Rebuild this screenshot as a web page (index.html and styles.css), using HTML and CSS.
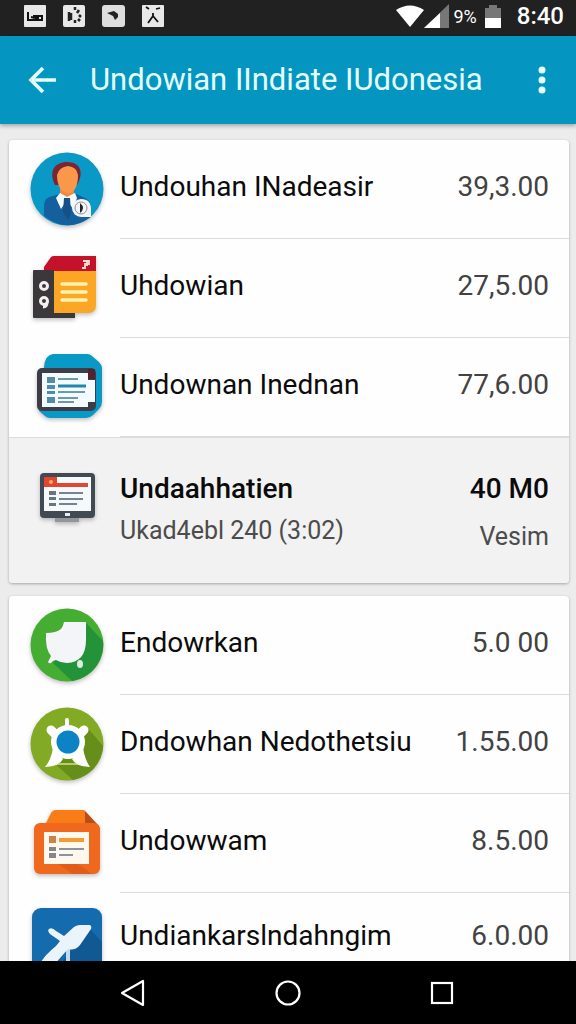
FILE: index.html
```html
<!DOCTYPE html>
<html lang="id">
<head>
    <meta charset="utf-8">
    <meta name="viewport" content="width=device-width, initial-scale=1">
    <title>Undowian IIndiate IUdonesia</title>
    <link rel="stylesheet" href="styles.css">
</head>
<body>
    <div class="status-bar">
        <div class="status-icons">
            <svg width="22" height="22" viewBox="0 0 22 22"><rect width="22" height="22" rx="1" fill="#e8e8e8"/><path d="M4 7v9M4 15h14M7 12l4 1M9 11h3v3M14 16v-5h4v5" fill="none" stroke="#111" stroke-width="2"/></svg>
            <svg width="22" height="22" viewBox="0 0 22 22"><rect width="22" height="22" rx="2" fill="#e8e8e8"/><path d="M6 7v9M8 8v7M12 2v3M16 5l-2 3M16 10l2 2M12 15v3M15 14l2 2" fill="none" stroke="#222" stroke-width="2.5"/></svg>
            <svg width="23" height="22" viewBox="0 0 23 22"><rect width="23" height="22" rx="3" fill="#dedede"/><path d="M5 8l7-2 4 3v3l-3 3-2-4z" fill="#222"/></svg>
            <svg width="22" height="22" viewBox="0 0 22 22"><rect width="22" height="22" rx="1" fill="#e8e8e8"/><path d="M4 2l3 2M14 4l4-1M6 18l5-7V8M11 11l5 6" fill="none" stroke="#111" stroke-width="1.8"/></svg>
        </div>
        <div class="status-info">
            <svg width="28" height="22" viewBox="0 0 28 22"><path d="M0 5Q14-4 28 5L14 22z" fill="#fff"/></svg>
            <svg width="25" height="24" viewBox="0 0 25 24"><path d="M0 24L25 0v24z" fill="#777"/><path d="M0 24L16 9v15z" fill="#fff"/></svg>
            <span class="percent">9%</span>
            <svg width="16" height="23" viewBox="0 0 16 23"><path d="M0 3h4V0h8v3h4v20H0z" fill="#777"/><path d="M0 13h16v10H0z" fill="#fff"/></svg>
            <span class="clock">8:40</span>
        </div>
    </div>

    <header class="app-bar">
        <button class="icon-button" aria-label="Kembali">
            <svg width="28" height="28" viewBox="0 0 28 28"><path d="M28 14H3M15 2L3 14l12 12" fill="none" stroke="#e4ffff" stroke-width="3.6"/></svg>
        </button>
        <h1>Undowian IIndiate IUdonesia</h1>
        <button class="icon-button" aria-label="Menu">
            <svg width="8" height="28" viewBox="0 0 8 28"><g fill="#e4ffff"><circle cx="4" cy="4" r="3.5"/><circle cx="4" cy="14" r="3.5"/><circle cx="4" cy="24" r="3.5"/></g></svg>
        </button>
    </header>

    <main class="content">
        <ul class="card">
            <li class="row">
                <svg class="row-icon" viewBox="0 0 76 76">
                    <circle cx="38" cy="38" r="36.5" fill="#0a98c6"/>
                    <path d="M15 65V55q0-9 9-10l10-3h11l11 5q6 3 6 10v9Q38 83 15 65z" fill="#145f9d"/>
                    <path d="M31 34h14v13l-7 5-7-5z" fill="#ef8a45"/>
                    <path d="M31 42l7 4 8-4 2 5-4 11-4-6h-4l-4 6-5-11z" fill="#f5fbff"/>
                    <path d="M35 47h6l1 15-3 7-5-8z" fill="#174f86"/>
                    <path d="M26 34c-7-14 0-23 12-23 14 0 17 11 10 23z" fill="#7c2434"/>
                    <path d="M28 24q2-8 11-9 9 1 10 9c0 10-3 18-10 18-7 0-11-8-11-18z" fill="#fa9749"/>
                    <path d="M52 48c7 0 10 4 10 10v8H52a9 9 0 010-18z" fill="#f2f5f8"/>
                    <circle cx="52" cy="57" r="6" fill="none" stroke="#8f9499"/><path d="M51 52q6 5 0 10z" fill="#222"/>
                </svg>
                <div class="row-body"><span class="title">Undouhan INadeasir</span><span class="value">39,3.00</span></div>
            </li>
            <li class="row">
                <svg class="row-icon" viewBox="0 0 76 76">
                    <path d="M15 24V17l7-10q1-1 3-1h42v18z" fill="#c5122c"/>
                    <path d="M5 20h20v42h21v6H5q-1 0-1-1V21q0-1 1-1z" fill="#3b383b"/>
                    <path d="M25 21h42v34q0 8-8 8H25z" fill="#fba624"/>
                    <path d="M33 34h24M33 42h24M33 50h24" fill="none" stroke="#fff3ae" stroke-width="3.5" stroke-linecap="round"/>
                    <path d="M54 11h6v3h-4v4h-3M58 10v6" fill="none" stroke="#ffdcd2" stroke-width="1.8"/>
                    <g fill="none" stroke="#f4eeee" stroke-width="3"><circle cx="15" cy="36" r="3.5"/><circle cx="15" cy="51" r="3.5"/><path d="M18 52q0 5-4 5"/></g>
                </svg>
                <div class="row-body"><span class="title">Uhdowian</span><span class="value">27,5.00</span></div>
            </li>
            <li class="row">
                <svg class="row-icon" viewBox="0 0 76 76">
                    <path d="M15 18q1-12 9-13h34q3 0 5 2l7 6q3 3 3 6v34q0 4-3 7l-6 6q-3 3-7 3H21q-3 0-5-2l-6-5z" fill="#0899c7"/>
                    <rect x="8" y="19" width="59" height="43" rx="5" fill="#3d3d49"/>
                    <path d="M13 24h46v7h7v22h-7v5H13z" fill="#f4fbff"/>
                    <path d="M59 20h7v10h-7z" fill="#53222e"/>
                    <path d="M18 28h8v6h-8zM18 36h8v4h-8zM18 42h8v3h-8zM18 48h8v6h-8z" fill="#518bad"/>
                    <path d="M29 30h20M29 43h27M29 49h20M29 53h16" stroke="#6c9aac" stroke-width="2"/>
                    <path d="M29 37h28" stroke="#2386ad" stroke-width="3"/>
                </svg>
                <div class="row-body"><span class="title">Undownan Inednan</span><span class="value">77,6.00</span></div>
            </li>
            <li class="row row-detail">
                <svg class="row-icon" viewBox="0 0 76 76">
                    <path d="M26 58h24v5H26z" fill="#91969a"/>
                    <rect x="11" y="14" width="55" height="45" rx="4" fill="#414a52"/>
                    <path d="M15 18h47v34H15z" fill="#f5f9fb"/>
                    <path d="M15 18h13v6h31v4H15z" fill="#e3462f"/><circle cx="22" cy="23" r="2" fill="#ffaf6f"/>
                    <path d="M20 32h7v4h-7zM20 38h7v3h-7zM20 44h7v3h-7z" fill="#68747e"/>
                    <path d="M30 34h24M30 40h24M30 45h18" stroke="#75838e" stroke-width="2"/>
                    <path d="M36 54h5v3h-5z" fill="#e7eef0"/>
                </svg>
                <div class="row-body">
                    <div class="lines"><span class="title">Undaahhatien</span><span class="subtitle">Ukad4ebl 240 (3:02)</span></div>
                    <div class="lines lines-end"><span class="title">40 M0</span><span class="subtitle">Vesim</span></div>
                </div>
            </li>
        </ul>

        <ul class="card">
            <li class="row">
                <svg class="row-icon" viewBox="0 0 76 76">
                    <circle cx="38" cy="38" r="36.5" fill="#45ad31"/>
                    <path d="M57 16l17 18A37 37 0 0143 74L24 56z" fill="#239239"/>
                    <path d="M17 26q10 0 15-4 2-2 3-7h22v18q0 22-19 23-6 0-11-3-3 0-5 3-2 1-3-1l3-6q-6-7-5-23z" fill="#f3f5f8"/>
                    <ellipse cx="51" cy="57" rx="3" ry="4" fill="#dceedd"/>
                </svg>
                <div class="row-body"><span class="title">Endowrkan</span><span class="value">5.0 00</span></div>
            </li>
            <li class="row">
                <svg class="row-icon" viewBox="0 0 76 76">
                    <circle cx="38" cy="38" r="36.5" fill="#82aa24"/>
                    <path d="M57 20l17 20A37 37 0 0144 74L24 56z" fill="#668e1b"/>
                    <path d="M24 58h30" stroke="#b8ce69" stroke-width="2"/>
                    <path d="M22 24l6 6M55 24l-6 6" stroke="#fff" stroke-width="9" stroke-linecap="round"/>
                    <path d="M38 14v9" stroke="#fff" stroke-width="4" stroke-linecap="round"/>
                    <path d="M24 42l10 11q-3 7-18 8 6-7 8-19zM54 42L43 53q3 7 18 8-5-7-7-19z" fill="#fff"/>
                    <circle cx="39" cy="36" r="17" fill="#fff"/>
                    <circle cx="39" cy="36" r="11.5" fill="#0b83c5"/>
                </svg>
                <div class="row-body"><span class="title">Dndowhan Nedothetsiu</span><span class="value">1.55.00</span></div>
            </li>
            <li class="row">
                <svg class="row-icon" viewBox="0 0 76 76">
                    <path d="M16 20l5-10q2-5 6-5h28l14 16z" fill="#f97d17"/>
                    <path d="M56 6l14 15-14-2z" fill="#b94e18"/>
                    <rect x="5" y="18" width="66" height="51" rx="6" fill="#ef681e"/>
                    <path d="M29 59h20l14 10H44z" fill="#df5c1b"/>
                    <path d="M15 27h45v32H15z" fill="#fff8ef"/>
                    <path d="M20 31h7v7h-7z" fill="#cf8146"/><path d="M30 35h25" stroke="#f49b31" stroke-width="4"/>
                    <path d="M20 42h7v4h-7zM20 48h7v5h-7z" fill="#85858a"/><path d="M30 44h25M30 50h14" stroke="#89949d" stroke-width="2"/>
                </svg>
                <div class="row-body"><span class="title">Undowwam</span><span class="value">8.5.00</span></div>
            </li>
            <li class="row row-last">
                <svg class="row-icon" viewBox="0 0 76 76">
                    <rect x="3" y="4" width="70" height="70" rx="9" fill="#146bad"/>
                    <path d="M60 24l13 14v27q0 9-9 9H20z" fill="#105993"/>
                    <path d="M37 42h4v22h-4z" fill="#c3dced"/>
                    <path d="M12 58q4-7 15-16l4-5-10-7q-3-3-1-5 3-2 7 2l8 5 10-9q3-2 6-2h10q2 1 1 4L51 41q-5 6-12 4L24 62l-10 8z" fill="#eaf4fa"/>
                </svg>
                <div class="row-body"><span class="title">Undiankarslndahngim</span><span class="value">6.0.00</span></div>
            </li>
        </ul>
    </main>

    <nav class="nav-bar">
        <button class="icon-button" aria-label="Kembali"><svg width="28" height="28" viewBox="0 0 28 28"><path d="M23 2v24L2 14z" fill="none" stroke="#fff" stroke-width="2.2" stroke-linejoin="round"/></svg></button>
        <button class="icon-button" aria-label="Beranda"><svg width="28" height="28" viewBox="0 0 28 28"><circle cx="14" cy="14" r="11.5" fill="none" stroke="#fff" stroke-width="2.2"/></svg></button>
        <button class="icon-button" aria-label="Terbaru"><svg width="28" height="28" viewBox="0 0 28 28"><rect x="4" y="4" width="20" height="20" fill="none" stroke="#fff" stroke-width="2.2"/></svg></button>
    </nav>
</body>
</html>
```

FILE: styles.css
```css
* {
    box-sizing: border-box;
}

body {
    display: flex;
    flex-direction: column;
    height: 100vh;
    margin: 0;
    font-family: Roboto, "Liberation Sans", sans-serif;
    background-color: #ececed;
    color: #0b0b0b;
}

svg {
    display: block;
    flex-shrink: 0;
}

.status-bar {
    display: flex;
    justify-content: space-between;
    align-items: center;
    flex-shrink: 0;
    height: 36px;
    padding: 0 12px 4px 24px;
    background-color: #212121;
    color: #fff;
}

.status-icons {
    display: flex;
    gap: 17px;
}

.status-info {
    display: flex;
    align-items: center;
}

.percent {
    margin: 0 8px 0 4px;
    font-size: 18px;
}

.clock {
    margin-left: 16px;
    font-size: 24px;
    font-weight: 500;
}

.app-bar {
    display: flex;
    align-items: center;
    flex-shrink: 0;
    height: 88px;
    padding: 0 30px 0 28px;
    background-color: #0495c1;
    box-shadow: 0 2px 4px rgba(0, 0, 0, 0.3);
    z-index: 1;
}

.app-bar h1 {
    flex: 1;
    margin: 0 0 0 34px;
    font-size: 31px;
    line-height: 40px;
    font-weight: 400;
    color: #e4ffff;
    white-space: nowrap;
}

.icon-button {
    padding: 0;
    border: none;
    background: none;
    cursor: pointer;
}

.content {
    flex: 1;
    min-height: 0;
    overflow: hidden;
    padding: 16px 7px 0 9px;
}

.card {
    margin: 0 0 13px;
    padding: 0;
    list-style: none;
    background-color: #fefefe;
    border-radius: 4px;
    box-shadow: 0 1px 3px rgba(0, 0, 0, 0.3);
    overflow: hidden;
}

.row {
    display: flex;
    align-items: flex-start;
    height: 99px;
    padding-left: 20px;
}

.row-icon {
    width: 76px;
    height: 76px;
    margin-top: 11px;
    filter: drop-shadow(0 2px 2px rgba(0, 0, 0, 0.25));
}

.row-body {
    display: flex;
    flex: 1;
    justify-content: space-between;
    align-items: center;
    height: 100%;
    margin-left: 15px;
    padding: 0 20px 4px 0;
    border-bottom: 1px solid #dcdcdc;
    white-space: nowrap;
}

.row:last-child .row-body {
    border-bottom: none;
}

.title {
    font-size: 28px;
    line-height: 36px;
}

.value {
    font-size: 28px;
    line-height: 36px;
    color: #424242;
}

.row-last {
    height: 90px;
}

.row-detail {
    height: 146px;
    border-top: 1px solid #dcdcdc;
    background-color: #f2f2f2;
}

.row-detail .row-icon {
    margin-top: 21px;
}

.row-detail .row-body {
    align-items: flex-start;
    padding-top: 33px;
}

.row-detail .title {
    font-weight: 500;
}

.lines {
    display: flex;
    flex-direction: column;
    gap: 6px;
}

.lines-end {
    align-items: flex-end;
    gap: 12px;
}

.subtitle {
    font-size: 25px;
    line-height: 36px;
    color: #4c4c4c;
}

.nav-bar {
    display: flex;
    justify-content: center;
    align-items: center;
    gap: 126px;
    flex-shrink: 0;
    height: 63px;
    background-color: #000;
}
```
